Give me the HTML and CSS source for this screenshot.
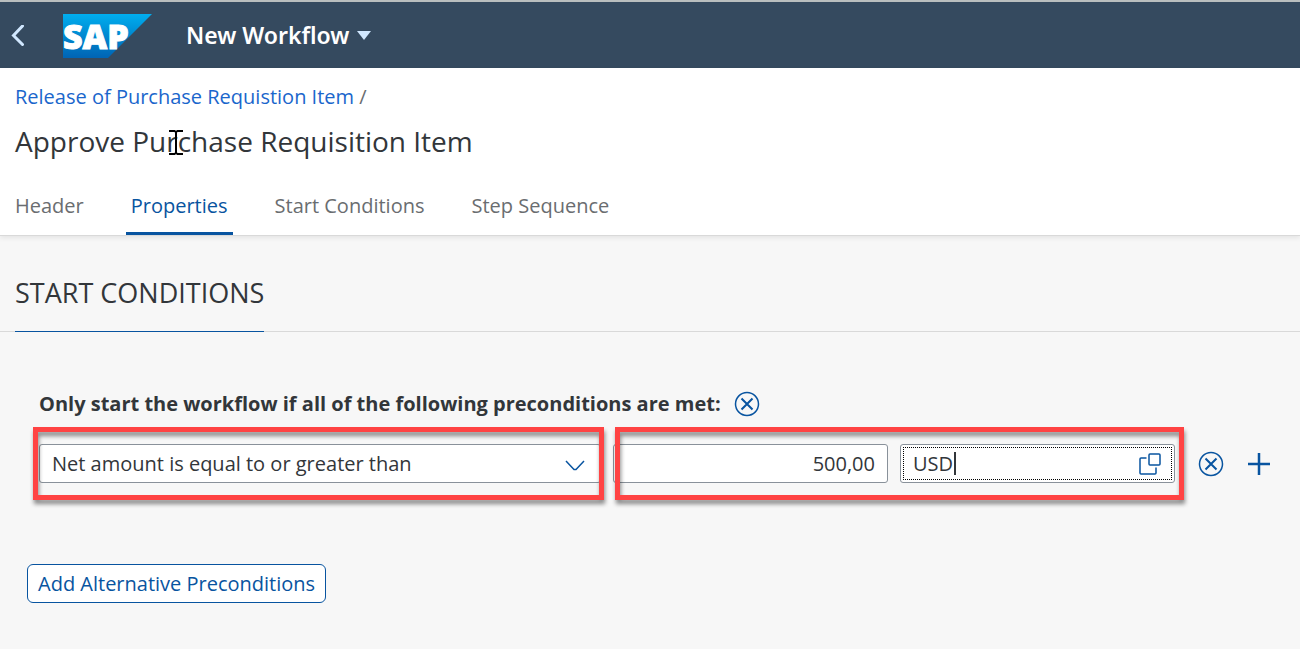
FILE: index.html
```html
<!DOCTYPE html>
<html lang="en">
<head>
<meta charset="utf-8">
<meta name="viewport" content="width=device-width, initial-scale=1">
<title>New Workflow</title>
<link rel="stylesheet" href="styles.css">
</head>
<body>
<header class="shell">
  <button class="shell-back" type="button" aria-label="Back">
    <svg width="14" height="22" viewBox="0 0 14 22"><path d="M11.500 1 2.500 10.500l9 9" fill="none" stroke="#d1e8ff" stroke-width="3" stroke-linecap="round"/></svg>
  </button>
  <a class="shell-logo" href="#" aria-label="Home">
    <svg width="89" height="44" viewBox="0 0 89 44">
      <defs><linearGradient id="logo-fill" x1="0" y1="0" x2="0" y2="1"><stop offset="0" stop-color="#00aeef"/><stop offset="0.500" stop-color="#0088d0"/><stop offset="1" stop-color="#0064b4"/></linearGradient></defs>
      <path d="M0 0h89L45 44H0z" fill="url(#logo-fill)"/>
      <text class="logo-text" x="0" y="35">SAP</text>
    </svg>
  </a>
  <button class="shell-title" type="button">New Workflow
    <svg width="14" height="12" viewBox="0 0 14 12"><path d="M0 2h14l-7 9z" fill="#d1e8ff"/></svg>
  </button>
</header>

<section class="page-head">
  <nav class="crumbs" aria-label="Breadcrumb"><a href="#">Release of Purchase Requistion Item</a> <span>/</span></nav>
  <h1 class="page-title">Approve Purchase Requisition Item
    <svg class="pointer" width="14" height="25" viewBox="0 0 14 25"><path d="M0 1h5.500L7 2 8.500 1H14M7 2v21M0 24h5.500L7 23l1.500 1H14" fill="none" stroke="#000" stroke-width="2"/></svg>
  </h1>
  <nav class="tabs" aria-label="Sections">
    <a class="tab" href="#">Header</a>
    <a class="tab tab-active" href="#" aria-current="true">Properties</a>
    <a class="tab" href="#">Start Conditions</a>
    <a class="tab" href="#">Step Sequence</a>
  </nav>
</section>

<main>
  <div class="section-head"><h2 class="section-title">START CONDITIONS</h2></div>
  <form class="conditions">
    <div class="group-head">
      <h3 class="group-title">Only start the workflow if all of the following preconditions are met:</h3>
      <button class="icon-button" type="button" aria-label="Remove group">
        <svg width="26" height="26" viewBox="0 0 26 26"><g fill="none" stroke="#0854a0" stroke-width="1.500"><circle cx="13" cy="13" r="11.500"/><path d="m7.500 7.500 11 11m0-11-11 11" stroke-width="2"/></g></svg>
      </button>
    </div>
    <div class="rule">
      <div class="rule-type marked">
        <div class="field">
          <select class="control" aria-label="Precondition"><option>Net amount is equal to or greater than</option></select>
          <svg class="chevron" width="20" height="12" viewBox="0 0 20 12"><path d="m1 1 8 8.500h2L19 1" fill="none" stroke="#0854a0" stroke-width="1.500"/></svg>
        </div>
      </div>
      <div class="rule-values marked">
        <div class="field"><input class="control control-number" type="text" value="500,00" aria-label="Amount"></div>
        <div class="field field-focused">
          <input class="control" type="text" value="USD" aria-label="Currency">
          <span class="caret"></span>
          <button class="value-help" type="button" aria-label="Open value help">
            <svg width="22" height="22" viewBox="0 0 22 22"><g fill="none" stroke="#0854a0" stroke-width="1.500"><rect x="10" y="1" width="11" height="11" rx="1"/><path d="M7.500 5H2q-1 0-1 1v14q0 1 1 1h14q1 0 1-1v-5.500"/></g></svg>
          </button>
        </div>
      </div>
      <div class="rule-actions">
        <button class="icon-button" type="button" aria-label="Remove precondition">
          <svg width="26" height="26" viewBox="0 0 26 26"><g fill="none" stroke="#0854a0" stroke-width="1.500"><circle cx="13" cy="13" r="11.500"/><path d="m7.500 7.500 11 11m0-11-11 11" stroke-width="2"/></g></svg>
        </button>
        <button class="icon-button" type="button" aria-label="Add precondition">
          <svg width="22" height="22" viewBox="0 0 22 22"><path d="M11 0v22M0 11h22" stroke="#0854a0" stroke-width="2.500"/></svg>
        </button>
      </div>
    </div>
    <button class="add-button" type="button">Add Alternative Preconditions</button>
  </form>
</main>
</body>
</html>
```
FILE: styles.css
```css
* { box-sizing: border-box; }
body { margin: 0; background: #f7f7f7; color: #32363a; font-family: "Open Sans", "Noto Sans", sans-serif; font-size: 20px; line-height: 28px; }
button { padding: 0; border: 0; background: none; font: inherit; }
a { text-decoration: none; }
h1, h2, h3 { margin: 0; font-weight: 400; }
svg { display: block; flex: none; }

.shell { display: flex; align-items: center; height: 68px; padding: 2px 0 0 11px; border-top: 2px solid #b9bebe; background: #354a5f; }
.shell-logo { margin-left: 38px; }
.logo-text { font-size: 34px; font-weight: 800; fill: #fff; stroke: #fff; stroke-width: 1px; }
.shell-title { display: flex; align-items: center; gap: 8px; margin-left: 34px; padding-bottom: 3px; color: #fff; font-family: "Noto Sans", sans-serif; font-size: 23px; font-weight: 600; }

.page-head { position: relative; padding: 15px 15px 0; border-bottom: 1px solid #d9d9d9; background: #fff; box-shadow: 0 2px 5px rgba(0, 0, 0, 0.08); }
.crumbs { color: #6a6d70; }
.crumbs a { color: #1a66cc; }
.page-title { position: relative; margin-top: 10px; font-size: 28px; line-height: 40px; }
.pointer { position: absolute; left: 154px; top: 9px; }
.tabs { display: flex; gap: 37px; margin-top: 31px; margin-left: -5px; }
.tab { height: 43px; padding: 0 5px; color: #6a6d70; }
.tab-active { border-bottom: 3px solid #0854a0; border-radius: 2px 2px 0 0; color: #0854a0; }

.section-head { display: flex; padding: 38px 15px 0; border-bottom: 1px solid #d9d9d9; }
.section-title { height: 58px; margin-bottom: -1px; border-bottom: 1px solid #0854a0; font-size: 27px; line-height: 38px; }

.conditions { padding: 58px 30px 40px 27px; }
.group-head { display: flex; align-items: center; gap: 13px; padding-left: 12px; }
.group-title { font-size: 20px; font-weight: 700; }
.rule { display: flex; align-items: center; margin-top: 26px; padding-left: 12px; }
.rule-type, .rule-values { position: relative; flex: 562 1 0; min-width: 0; }
.rule-type { margin-right: 12px; }
.rule-values { display: grid; grid-template-columns: 1fr 1fr; gap: 12px; }
.rule-actions { display: flex; align-items: center; gap: 24px; margin-left: 23px; }

/* Highlight frames around the two value areas */
.marked::after { content: ""; position: absolute; top: -17px; bottom: -17px; border: 5px solid #ff4343; filter: drop-shadow(1px 4px 2px rgba(0, 0, 0, 0.45)); pointer-events: none; }
.rule-type::after { left: -6px; right: -3px; }
.rule-values::after { left: 2px; right: -9px; }

.field { position: relative; }
.control { display: block; width: 100%; height: 39px; padding: 0 12px; border: 1px solid #89919a; border-radius: 3px; outline: none; appearance: none; background: #fff; color: #32363a; font: inherit; }
.control-number { text-align: right; }
.chevron { position: absolute; right: 16px; top: 16px; pointer-events: none; }
.field-focused::after { content: ""; position: absolute; inset: 3px; border: 1px dotted #000; pointer-events: none; }
.caret { position: absolute; left: 54px; top: 8px; width: 2px; height: 23px; background: #32363a; }
.value-help { position: absolute; right: 14px; top: 9px; z-index: 1; }
.add-button { height: 39px; margin-top: 81px; padding: 0 10px; border: 1px solid #0854a0; border-radius: 6px; background: #fff; color: #0854a0; }
```
